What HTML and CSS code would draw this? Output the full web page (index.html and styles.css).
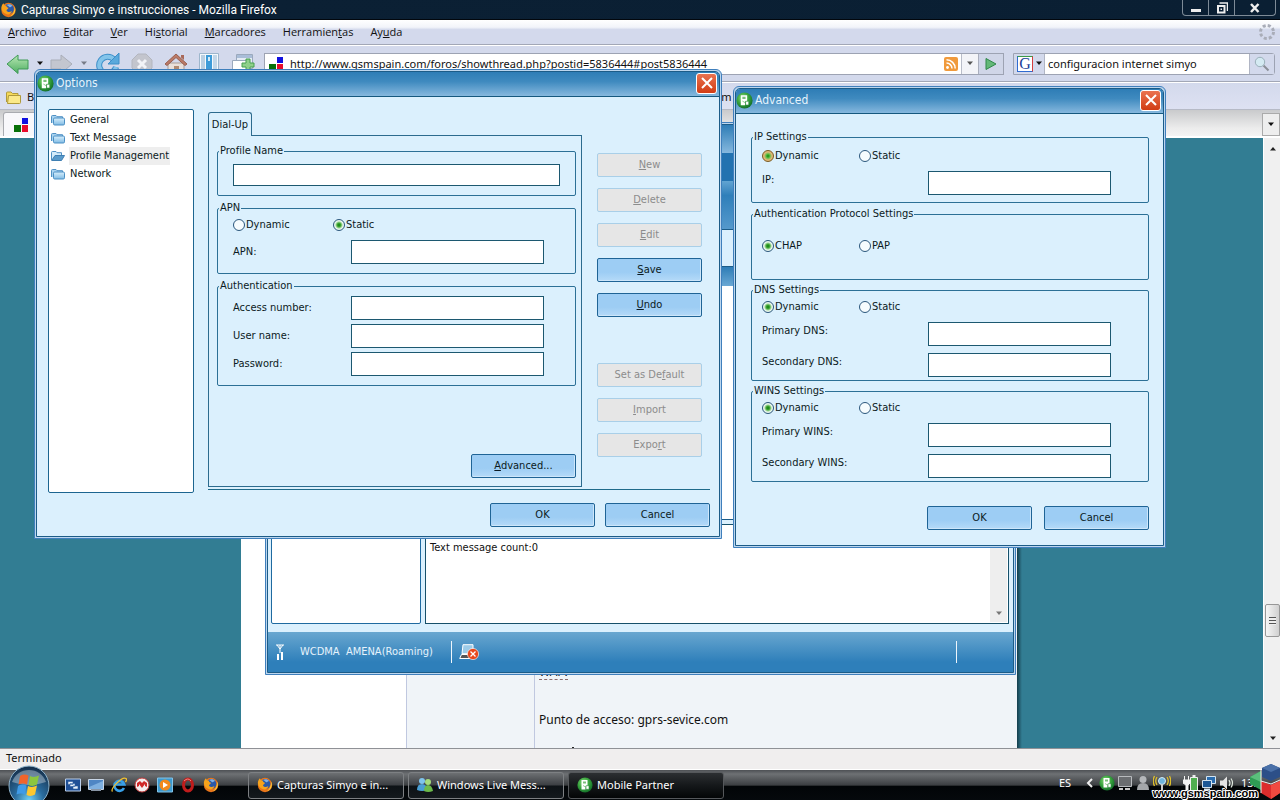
FILE: index.html
```html
<!DOCTYPE html>
<html lang="es">
<head>
<meta charset="utf-8">
<title>Capturas Simyo e instrucciones - Mozilla Firefox</title>
<link rel="stylesheet" href="styles.css">
</head>
<body>
<svg class="defs" aria-hidden="true">
  <defs>
    <radialGradient id="gGreen" cx=".4" cy=".35" r=".7"><stop offset="0" stop-color="#8fdc7e"/><stop offset=".5" stop-color="#3aa53f"/><stop offset="1" stop-color="#0e6a26"/></radialGradient>
    <linearGradient id="gFolder" x1="0" y1="0" x2="0" y2="1"><stop offset="0" stop-color="#d9effc"/><stop offset="1" stop-color="#7fbbe4"/></linearGradient>
    <linearGradient id="gArrow" x1="0" y1="0" x2="0" y2="1"><stop offset="0" stop-color="#b9e8b4"/><stop offset="1" stop-color="#4fae62"/></linearGradient>
    <radialGradient id="gOrb" cx=".5" cy=".85" r=".8"><stop offset="0" stop-color="#6fd0f5"/><stop offset=".45" stop-color="#2a6c9e"/><stop offset="1" stop-color="#16324f"/></radialGradient>
  </defs>
  <symbol id="mobile" viewBox="0 0 16 16"><circle cx="8" cy="8" r="7.6" fill="url(#gGreen)"/><path d="M4.500 3h6v6h-2v3.500h-4z" fill="#fff"/><path d="M6 4.500h3v2H6z" fill="#7cc07c"/><path d="M9 8.700h3v3.600H9z" fill="#fff" stroke="#2b8a3a" stroke-width=".6"/><path d="M6 8.500l2.500 1.500" stroke="#7cc07c" stroke-width=".8"/></symbol>
  <symbol id="fox" viewBox="0 0 16 16"><circle cx="8" cy="8" r="7.2" fill="#e8751a"/><circle cx="8.4" cy="7" r="5" fill="#2b59a8"/><path d="M6 3c2-1.4 5-.8 6 1-1 .2-1.400 1-2.400 1.200C8.500 5.500 8.800 4 6 3z" fill="#7fb2e8"/><path d="M.8 6C1 3.600 2 2 3 1.200l.8 2 2.200.600c-.2 1.200.6 1.600 2 1.900-.4 1.500-1.800 1.500-2 2.800.8 1.900 3.600 1.900 5.400.4-.6 2.900-3.200 4.200-5.800 3.200C2.800 11 1.200 9 .8 6z" fill="#f7a31c"/><path d="M14.200 4.500c1.600 4-.2 8.500-4.200 9.800 2.500-2 4.200-5 4.200-9.800z" fill="#fbd03c"/></symbol>
  <symbol id="folder" viewBox="0 0 14 12"><path d="M.5 9V2.500Q.5 1.500 1.500 1.500H5L6 2.700h5.500V9" fill="#a9d3f0" stroke="#5091c4"/><rect x="2.500" y="4" width="11" height="7" rx="1.200" fill="url(#gFolder)" stroke="#4b8fc4"/></symbol>
  <symbol id="folderopen" viewBox="0 0 14 12"><path d="M.5 10V2.500Q.5 1.500 1.500 1.500H5L6 2.700h4.500V6" fill="#d5ecfa" stroke="#5091c4"/><path d="M.7 10.500L4 5.500h9.500L10.500 10.500z" fill="#5a9bcb" stroke="#3f7fb2"/></symbol>
  <symbol id="blocks" viewBox="0 0 14 14"><path d="M8 0h6v6H8z" fill="#1010e0"/><path d="M0 7h7v7H0z" fill="#087008"/><path d="M8 7h6v7H8z" fill="#e80c2c"/></symbol>
  <symbol id="cross" viewBox="0 0 12 12"><path d="M1 1l10 10M11 1L1 11" stroke="#fff" stroke-width="2"/></symbol>
  <symbol id="down" viewBox="0 0 8 5"><path d="M1 .5h6L4 4z" fill="currentColor"/></symbol>
</svg>

<div class="browser">
  <header class="titlebar">
    <svg width="17" height="16"><use href="#fox"/></svg>
    <h1>Capturas Simyo e instrucciones - Mozilla Firefox</h1>
    <div class="winbtns">
      <button aria-label="Minimizar"><svg width="12" height="12"><path d="M1 7h10v3H1z" fill="#eee"/></svg></button>
      <button aria-label="Restaurar"><svg width="12" height="12"><path d="M3.500 1h8v8" fill="none" stroke="#eee" stroke-width="1.500"/><path d="M2 4h6.500v6.500H2z" fill="none" stroke="#eee" stroke-width="2"/><path d="M4.500 6.500h1.500v1.500H4.500z" fill="#eee"/></svg></button>
      <button class="wide" aria-label="Cerrar"><svg width="12" height="12"><path d="M2 2l7.500 8M9.500 2L2 10" stroke="#eee" stroke-width="2.500"/></svg></button>
    </div>
  </header>
  <nav class="menubar">
    <a href="#"><u>A</u>rchivo</a><a href="#"><u>E</u>ditar</a><a href="#"><u>V</u>er</a><a href="#">Hi<u>s</u>torial</a><a href="#"><u>M</u>arcadores</a><a href="#">Herramien<u>t</u>as</a><a href="#">Ay<u>u</u>da</a>
    <svg class="throbber" width="18" height="18" viewBox="0 0 18 18"><circle cx="9" cy="9" r="6.500" fill="none" stroke="#a9adb8" stroke-width="3" stroke-dasharray="3 2.100"/></svg>
  </nav>
  <div class="toolbar">
    <div class="tools">
      <svg class="back" width="24" height="20" viewBox="0 0 24 20"><path d="M1 10L12 1v5h10v9H12v4.500z" fill="url(#gArrow)" stroke="#3f9a56"/></svg>
      <svg class="drop" width="8" height="5"><use href="#down"/></svg>
      <svg class="fwd" width="24" height="20" viewBox="0 0 24 20"><path d="M22 10L11 1v5H1v9h10v4.500z" fill="#c3c6cf" stroke="#a9adb8"/></svg>
      <svg class="drop dim" width="8" height="5"><use href="#down"/></svg>
      <svg class="gap7" width="24" height="22" viewBox="0 0 24 22"><path d="M18 6.500A8.500 8.500 0 1 0 20 14" fill="none" stroke="#3d8fc9" stroke-width="6"/><path d="M18 6.500A8.500 8.500 0 1 0 20 14" fill="none" stroke="#83c4ea" stroke-width="4"/><path d="M23 0v11H12z" fill="#5aa9dc" stroke="#3d8fc9"/></svg>
      <svg class="gap11" width="22" height="22" viewBox="0 0 22 22"><path d="M7 1h8l6 6v8l-6 6H7l-6-6V7z" fill="#c3c5cd" stroke="#b3b6bf"/><path d="M7 7l8 8M15 7l-8 8" stroke="#f2f3f7" stroke-width="3"/></svg>
      <svg class="gap11" width="24" height="22" viewBox="0 0 24 22"><path d="M4 10h16v11H4z" fill="#e9e0da" stroke="#a99b95"/><path d="M1 11L12 1l11 10-2 1.500-9-8-9 8z" fill="#bb7a67" stroke="#99604f"/><path d="M17 2h3v5l-3-2.500z" fill="#a9695a"/><path d="M10 13h5v8h-5z" fill="#b08a72"/></svg>
      <svg class="gap11" width="20" height="22" viewBox="0 0 20 22"><path d="M.5.500h19v21H.5z" fill="#f4f8fc" stroke="#9db6cc"/><path d="M2 2h4v20H2z" fill="#b9cfe2"/><path d="M7 2h6v20H7z" fill="#3d9bd8"/><path d="M9 4h2v4H9z" fill="#d4ecfa"/><path d="M14 2h4v20h-4z" fill="#c3d7e8"/></svg>
      <svg class="gap12" width="24" height="22" viewBox="0 0 24 22"><path d="M5.500 1.500h16v14h-16z" fill="#e4ebf4" stroke="#9aa9bd"/><path d="M6 2h15v3H6z" fill="#a9bdd8"/><path d="M1.500 7.500h15v13h-15z" fill="#fff" stroke="#9aa9bd"/><path d="M15 6h4v4h4v4h-4v4h-4v-4h-4v-4h4z" fill="#8fd08a" stroke="#47a04e"/></svg>
    </div>
    <div class="urlbox">
      <svg width="14" height="14"><use href="#blocks"/></svg>
      <input aria-label="Dirección" value="http://www.gsmspain.com/foros/showthread.php?postid=5836444#post5836444">
      <svg width="14" height="14" viewBox="0 0 14 14"><rect width="14" height="14" rx="2" fill="#f09a3c"/><circle cx="3.500" cy="10.500" r="1.400" fill="#fff"/><path d="M2.500 6a5.500 5.500 0 0 1 5.500 5.500M2.500 2.800A8.700 8.700 0 0 1 11.200 11.500" fill="none" stroke="#fff" stroke-width="1.500"/></svg>
      <button class="urldrop" aria-label="Historial de direcciones"><svg width="8" height="5"><use href="#down"/></svg></button>
      <button class="go" aria-label="Ir"><svg width="12" height="14" viewBox="0 0 12 14"><path d="M1 1.500L11 7 1 12.500z" fill="#63b878" stroke="#2f8748"/></svg></button>
    </div>
    <div class="searchbox">
      <button class="engine" aria-label="Buscador"><span>G</span><svg width="8" height="5"><use href="#down"/></svg></button>
      <input aria-label="Buscar" value="configuracion internet simyo">
      <button class="lens" aria-label="Buscar"><svg width="16" height="16" viewBox="0 0 16 16"><path d="M9.500 9.500l5 5" stroke="#8b8f98" stroke-width="2"/><circle cx="6" cy="6" r="4.700" fill="#d4eaf2" stroke="#9ab0ba"/></svg></button>
    </div>
  </div>
  <div class="bookmarks">
    <svg width="15" height="13" viewBox="0 0 15 13"><path d="M.5 11V2q0-1 1-1H5l1.500 1.500H12V5" fill="#f5d95a" stroke="#b09a3c"/><path d="M2.500 4.500h12v7q0 1-1 1h-12z" fill="#fbe98a" stroke="#b09a3c"/></svg>
    <span>B</span><span class="mark">m</span>
  </div>
  <div class="tabstrip">
    <div class="tab"><svg width="14" height="14"><use href="#blocks"/></svg></div>
    <button aria-label="Lista de pestañas"><svg width="8" height="5"><use href="#down"/></svg></button>
  </div>
  <div class="viewport">
    <main class="page">
      <div class="sheet">
        <div class="author"></div><div class="side"></div>
        <div class="post"><abbr>WAP:</abbr><p>Punto de acceso: gprs-sevice.com</p><i></i></div>
      </div>
    </main>
    <div class="scroll">
      <svg width="8" height="5" class="up"><use href="#down"/></svg>
      <div class="thumb"></div>
      <svg width="8" height="5"><use href="#down"/></svg>
    </div>
  </div>
  <div class="statusbar">Terminado</div>
</div>

<section class="win partner">
  <div class="frame">
    <div class="band title"></div><div class="band menu"></div><div class="band tools2"></div><div class="band light"></div>
    <div class="panes">
      <div class="list"></div>
      <div class="right">
        <div class="table"><div class="thead"></div></div>
        <div class="preview"><p>Text message count:0</p><div class="bar"><svg width="8" height="5"><use href="#down"/></svg></div></div>
      </div>
    </div>
    <footer>
      <svg width="10" height="16" viewBox="0 0 10 16"><path d="M1 1h8M2 1l3 4 3-4M5 1v8" fill="none" stroke="#fff"/><path d="M2 10h2v6H2zM6 8h2v8H6z" fill="#fff"/></svg>
      <span class="net">WCDMA&nbsp; AMENA(Roaming)</span>
      <span class="sep"></span>
      <svg width="20" height="16" viewBox="0 0 20 16"><path d="M4 .7h10v9H3z" fill="#9ccbe8" stroke="#fff"/><path d="M2.500 10.500h11l2 4H.7z" fill="#555" stroke="#fff"/><circle cx="14" cy="10" r="5.600" fill="#e8481c" stroke="#fff" stroke-width=".6"/><path d="M11.500 7.500l5 5M16.500 7.500l-5 5" stroke="#fff" stroke-width="1.300"/></svg>
      <span class="sep last"></span>
    </footer>
  </div>
</section>

<section class="win options" aria-label="Options">
  <div class="frame">
    <header><svg width="17" height="17"><use href="#mobile"/></svg><h2>Options</h2><button class="close" aria-label="Close"><svg width="12" height="12"><use href="#cross"/></svg></button></header>
    <form class="optbody">
      <ul class="tree">
        <li><svg width="14" height="12"><use href="#folder"/></svg><a href="#">General</a></li>
        <li><svg width="14" height="12"><use href="#folder"/></svg><a href="#">Text Message</a></li>
        <li><svg width="14" height="12"><use href="#folderopen"/></svg><a href="#" class="on">Profile Management</a></li>
        <li><svg width="14" height="12"><use href="#folder"/></svg><a href="#">Network</a></li>
      </ul>
      <div class="main">
        <div class="upper">
          <div class="tabs">
            <button type="button" class="dial">Dial-Up</button>
            <div class="panel">
              <fieldset><legend>Profile Name</legend><div class="name"><input class="box" type="text" aria-label="Profile Name"></div></fieldset>
              <fieldset><legend>APN</legend>
                <div class="radios"><label><input type="radio" name="apn">Dynamic</label><label><input type="radio" name="apn" checked>Static</label></div>
                <div class="row first"><label for="apn">APN:</label><input class="box" id="apn" type="text"></div>
              </fieldset>
              <fieldset><legend>Authentication</legend>
                <div class="row"><label for="num">Access number:</label><input class="box" id="num" type="text"></div>
                <div class="row"><label for="usr">User name:</label><input class="box" id="usr" type="text"></div>
                <div class="row"><label for="pwd">Password:</label><input class="box" id="pwd" type="password"></div>
              </fieldset>
              <button type="button" class="btn adv"><span><u>A</u>dvanced...</span></button>
            </div>
          </div>
          <div class="actions">
            <button type="button" class="btn" disabled><span><u>N</u>ew</span></button>
            <button type="button" class="btn" disabled><span><u>D</u>elete</span></button>
            <button type="button" class="btn" disabled><span><u>E</u>dit</span></button>
            <button type="button" class="btn"><span><u>S</u>ave</span></button>
            <button type="button" class="btn"><span><u>U</u>ndo</span></button>
            <button type="button" class="btn second" disabled><span>Set as De<u>f</u>ault</span></button>
            <button type="button" class="btn" disabled><span><u>I</u>mport</span></button>
            <button type="button" class="btn" disabled><span>Expo<u>r</u>t</span></button>
          </div>
        </div>
        <div class="foot"><button type="button" class="btn">OK</button><button type="button" class="btn">Cancel</button></div>
      </div>
    </form>
  </div>
</section>

<section class="win advanced" aria-label="Advanced">
  <div class="frame">
    <header><svg width="17" height="17"><use href="#mobile"/></svg><h2>Advanced</h2><button class="close" aria-label="Close"><svg width="12" height="12"><use href="#cross"/></svg></button></header>
    <form class="advbody">
      <fieldset class="ip"><legend>IP Settings</legend>
        <div class="radios"><label><input class="hot" type="radio" name="ip" checked>Dynamic</label><label><input type="radio" name="ip">Static</label></div>
        <div class="row"><label for="ip">IP:</label><input class="box" id="ip" type="text"></div>
      </fieldset>
      <fieldset class="auth"><legend>Authentication Protocol Settings</legend>
        <div class="radios"><label><input type="radio" name="au" checked>CHAP</label><label><input type="radio" name="au">PAP</label></div>
      </fieldset>
      <fieldset><legend>DNS Settings</legend>
        <div class="radios"><label><input type="radio" name="dns" checked>Dynamic</label><label><input type="radio" name="dns">Static</label></div>
        <div class="row"><label for="d1">Primary DNS:</label><input class="box" id="d1" type="text"></div>
        <div class="row"><label for="d2">Secondary DNS:</label><input class="box" id="d2" type="text"></div>
      </fieldset>
      <fieldset><legend>WINS Settings</legend>
        <div class="radios"><label><input type="radio" name="wins" checked>Dynamic</label><label><input type="radio" name="wins">Static</label></div>
        <div class="row"><label for="w1">Primary WINS:</label><input class="box" id="w1" type="text"></div>
        <div class="row"><label for="w2">Secondary WINS:</label><input class="box" id="w2" type="text"></div>
      </fieldset>
      <div class="foot"><button type="button" class="btn">OK</button><button type="button" class="btn">Cancel</button></div>
    </form>
  </div>
</section>

<footer class="taskbar">
  <button class="orb" aria-label="Inicio"><svg width="42" height="42" viewBox="0 0 42 42"><circle cx="21" cy="21" r="20" fill="url(#gOrb)" stroke="#8fb4cc"/><path d="M4 17a18 18 0 0 1 34 0q-17 6-34 0z" fill="#fff" opacity=".35"/><path d="M12 11q4-2.500 8.500-.5l-1.500 9q-4-2-8.500 0z" fill="#f0642c"/><path d="M22 11q4 2 9-.5l-2 9q-4 2.500-8.500.5z" fill="#8cc63e"/><path d="M10 21q4-2.500 8.500-.5l-1.500 9q-4-2-8.500 0z" fill="#3f9be8"/><path d="M20 21q4 2 9-.5l-2 9q-4 2.500-8.500.5z" fill="#fdc82f"/></svg></button>
  <div class="quick">
    <svg width="16" height="16" viewBox="0 0 16 16"><path d="M.5 2h15v12H.5z" fill="#1f4f96" stroke="#bcd0ea"/><path d="M3 4.500h5v3H3zM5 6.500h5v3H5zM8 9h5v3H8z" fill="#e8f0fa" stroke="#2a5aa0" stroke-width=".6"/></svg>
    <svg width="16" height="16" viewBox="0 0 16 16"><path d="M.5 2.500h15v10H.5z" fill="#4f86c4" stroke="#c7d5e6"/><path d="M1 10L15 4v8H1z" fill="#7fb0e0"/><path d="M3 12h10v2H3z" fill="#8895a5"/></svg>
    <svg width="16" height="16" viewBox="0 0 16 16"><path d="M13 11a5 5 0 1 1 .3-3.500H5" fill="none" stroke="#38a0e8" stroke-width="2.600"/><path d="M1.500 14.500C-1 12 11-1 15 1.500c1 .8.300 2.500-.5 3.500" fill="none" stroke="#f2c230" stroke-width="1.300"/></svg>
    <svg width="16" height="16" viewBox="0 0 16 16"><circle cx="8" cy="8" r="7" fill="#f4eeee" stroke="#c23a3a"/><path d="M3 10V6l3-2 2 2 2-2 3 2v4l-2-1V7l-3 4-3-4v2z" fill="#d02828"/></svg>
    <svg width="16" height="16" viewBox="0 0 16 16"><path d="M.5 1h15v14H.5z" fill="#3c9ad0" stroke="#83c4e8"/><circle cx="8" cy="8" r="5.500" fill="#f28a1c"/><path d="M6 5l5 3-5 3z" fill="#fff"/></svg>
    <svg width="16" height="16" viewBox="0 0 16 16"><ellipse cx="8" cy="8" rx="4.500" ry="6" fill="none" stroke="#c01c1c" stroke-width="3"/><path d="M4 4q4-4 7 0" fill="none" stroke="#f08a80"/></svg>
    <svg width="16" height="16"><use href="#fox"/></svg>
  </div>
  <div class="tasks">
    <button><svg width="16" height="16"><use href="#fox"/></svg>Capturas Simyo e in...</button>
    <button><svg width="16" height="16" viewBox="0 0 16 16"><circle cx="5" cy="4" r="3" fill="#7fc4ec"/><path d="M0 13q0-6 5-6t5 6q-5 2-10 0z" fill="#4a9fd4"/><circle cx="11" cy="5" r="3" fill="#a4dc7c"/><path d="M7 14q0-6 4-6t5 6q-5 2-9 0z" fill="#6cba4a"/></svg>Windows Live Mess...</button>
    <button class="active"><svg width="16" height="16"><use href="#mobile"/></svg>Mobile Partner</button>
  </div>
  <div class="tray">
    <span>ES</span>
    <svg class="chev" width="8" height="10" viewBox="0 0 8 10"><path d="M6 1L2 5l4 4" fill="none" stroke="#eee" stroke-width="2"/></svg>
    <svg width="16" height="16"><use href="#mobile"/></svg>
    <svg width="16" height="16" viewBox="0 0 16 16"><path d="M1.500 1.500h13v10h-13z" fill="#6a6d70" stroke="#b8bbbe"/><path d="M2 14h4M8 14h5" stroke="#c8c8c8" stroke-width="2"/></svg>
    <svg width="16" height="16" viewBox="0 0 16 16"><circle cx="8" cy="4.500" r="3.500" fill="#b4b7ba"/><path d="M2 15q0-7 6-7t6 7z" fill="#a4a7aa"/></svg>
    <svg width="18" height="16" viewBox="0 0 18 16"><circle cx="9" cy="6" r="3.500" fill="#6fb4dc" stroke="#d8ecf4"/><path d="M9 9v6" stroke="#ccc" stroke-width="2"/><path d="M4 2q-2.500 4 0 8M14 2q2.500 4 0 8M1.500 1q-2.500 5 0 10M16.500 1q2.500 5 0 10" fill="none" stroke="#e0c02c" stroke-width="1.300"/></svg>
    <svg class="plug" width="16" height="16" viewBox="0 0 16 16"><path d="M7.500 2.500h7v13h-7z" fill="#4fae4f" stroke="#eee"/><path d="M9.500 0h3v2h-3z" fill="#eee"/><path d="M1.500 1v4M5.500 1v4M0 5h7v3L5 10v5H3v-5L0 8z" stroke="#f4f4f4" fill="#f4f4f4"/></svg>
    <svg width="16" height="16" viewBox="0 0 16 16"><path d="M5.500 1.500h9v7h-9z" fill="#2a6cae" stroke="#d4e4f0"/><path d="M1.500 5.500h9v7h-9z" fill="#1c5896" stroke="#d4e4f0"/><path d="M3 14.500h6" stroke="#d4e4f0" stroke-width="2"/></svg>
    <svg width="16" height="16" viewBox="0 0 16 16"><path d="M1 5.500h3l4-4v13l-4-4H1z" fill="#e4e4e4"/><path d="M10 5q2 3 0 6M12 3.500q3 4.500 0 9" fill="none" stroke="#dfe8df" stroke-width="1.200"/></svg>
    <span class="clock">13:</span>
  </div>
  <div class="brand"><span>www.gsmspain.com</span>
    <svg width="30" height="36" viewBox="0 0 30 36"><path d="M12 4l9-4 9 4v9l-9 4-9-4z" fill="#2c4f88"/><path d="M12 4l9 4 9-4-9-4z" fill="#4a70a8"/><path d="M0 13l11-6v19L0 20z" fill="#2f9c54"/><path d="M0 13l11 5V7z" fill="#5bbf7c"/><path d="M11 17l10 4 9-4v12l-9 6-10-6z" fill="#dc2c2c"/><path d="M21 21l9-4v12l-9 6z" fill="#f04a40"/><path d="M11 17V6M11 17l10 3 9-4M11 17v12" stroke="#eee" fill="none"/></svg>
  </div>
</footer>
</body>
</html>
```

FILE: styles.css
```css
* { box-sizing: border-box; }
html, body { height: 100%; }
body {
  margin: 0; min-height: 100vh; display: flex; flex-direction: column; overflow: hidden; position: relative;
  font: 11px/14px "DejaVu Sans Condensed", "DejaVu Sans", sans-serif; color: #0b1a22; background: #000;
}
a { color: inherit; text-decoration: none; }
u { text-underline-offset: 1px; }
button, input { font: inherit; color: inherit; margin: 0; padding: 0; border: 0; background: none; outline: 0; }
svg { flex: none; display: block; }
h1, h2, p, ul { margin: 0; padding: 0; font-weight: normal; }
.defs { position: absolute; width: 0; height: 0; }

/* Browser */
.browser { flex: 1; min-height: 0; display: flex; flex-direction: column; font: 11px/14px "Noto Sans", sans-serif; color: #111; background: #d3d9ec; }
.titlebar { height: 20px; display: flex; align-items: center; gap: 4px; background: linear-gradient(90deg, #1d3d4c, #0b2034 18%, #0a1f33); border-bottom: 1px solid #02070d; color: #fff; }
.titlebar h1 { flex: 1; font: 12px/16px Roboto, sans-serif; }
.winbtns { display: flex; align-self: flex-start; height: 16px; margin-right: 4px; border: 1px solid #7e8b97; border-top: 0; border-radius: 0 0 4px 4px; }
.winbtns button { width: 26px; display: grid; place-items: center; border-right: 1px solid #7e8b97; }
.winbtns .wide { width: 40px; border: 0; }
.menubar { height: 25px; padding: 0 4px 0 8px; display: flex; align-items: center; gap: 17px; background: linear-gradient(#fff, #f2f4fa 30%, #d3d9ec 40%); border-bottom: 1px solid #a2a7b6; font-family: "Open Sans", sans-serif; }
.throbber { margin-left: auto; }
.toolbar { height: 37px; padding: 0 5px 0 6px; display: flex; align-items: center; border-top: 1px solid #fff; border-bottom: 1px solid #a2a7b6; }
.tools { width: 258px; display: flex; align-items: center; }
.drop { margin: 0 6px 0 6px; }
.dim { color: #777c88; }
.gap7 { margin-left: 2px; }
.gap12 { margin-left: 12px; }
.gap11 { margin-left: 11px; }
.urlbox, .searchbox { height: 22px; display: flex; align-items: center; background: #fff; border: 1px solid #9da3b3; }
.urlbox { flex: 1; padding-left: 4px; }
.urlbox input { flex: 1; min-width: 0; padding-left: 7px; }
.urldrop { width: 17px; height: 20px; margin-left: 3px; display: grid; place-items: center; border-left: 1px solid #b9bdc9; background: #f3f4f8; color: #555; }
.go { width: 25px; height: 20px; display: grid; place-items: center; border-left: 1px solid #a9aebd; background: #d0d6e8; }
.searchbox { width: 267px; margin-left: 9px; border-radius: 0 3px 3px 0; }
.searchbox { width: 262px; }
.searchbox input { flex: 1; min-width: 0; padding-left: 3px; }
.engine { width: 31px; height: 20px; padding-left: 3px; display: flex; align-items: center; gap: 2px; background: #d3d9ec; border-right: 1px solid #b0b5c4; }
.engine span { width: 16px; height: 16px; border: 1px solid #2f6bd0; border-top-color: #3c9a4a; border-right-color: #d43c3c; background: #fff; color: #1b3f98; font: 16px/14px "Liberation Serif", serif; text-align: center; }
.lens { width: 25px; height: 20px; display: grid; place-items: center; background: #d3d9ec; border-left: 1px solid #b0b5c4; }
.bookmarks { height: 28px; padding: 2px 6px 0; display: flex; align-items: center; gap: 6px; background: linear-gradient(#d3d9ec, #dde1f2); border-top: 1px solid #fff; border-bottom: 1px solid #b6bac6; }
.mark { margin-left: 681px; }
.tabstrip { height: 28px; padding-left: 3px; display: flex; align-items: flex-end; justify-content: space-between; background: linear-gradient(#c9cacc, #ececec 70%, #f4f4f4); border-bottom: 2px solid #fff; }
.tab { width: 240px; height: 24px; padding-left: 10px; display: flex; align-items: center; background: #f8f8fb; border: 1px solid #a9abb0; border-bottom: 0; border-radius: 3px 3px 0 0; }
.tabstrip button { width: 18px; height: 23px; display: grid; place-items: center; background: #eee; border: 1px solid #aaa; }
.viewport { flex: 1; min-height: 0; display: flex; }
.page { flex: 1; overflow: hidden; background: #327d93; display: flex; justify-content: center; }
.sheet { width: 781px; padding-right: 5px; display: flex; background: linear-gradient(90deg, #143d4b, #327d93) right / 5px 100% no-repeat; }
.author { width: 166px; background: #fff; border-right: 1px solid #c0c8e0; }
.side { width: 128px; background: #f0f4f8; border-right: 1px solid #c0c8e0; }
.post { flex: 1; background: #f0f4f8; padding-left: 4px; display: flex; flex-direction: column; justify-content: flex-end; align-items: flex-start; font: 12px/16px "Noto Sans", sans-serif; }
.post abbr { line-height: 14px; border-bottom: 1px dashed #8a6a6a; margin-bottom: 32px; }
.post p { margin-bottom: 19px; }
.post i { width: 2px; height: 1px; margin-left: 33px; background: #222; }
.scroll { width: 17px; padding: 8px 0 7px 1px; background: #f0f0f0; border-left: 1px solid #fff; display: flex; flex-direction: column; align-items: center; justify-content: space-between; color: #222; }
.up { transform: rotate(180deg); }
.thumb { width: 15px; height: 33px; margin-top: auto; margin-bottom: 99px; border: 1px solid #979797; border-radius: 2px; background: repeating-linear-gradient(#555 0 1px, #eee 1px 3px) center / 7px 8px no-repeat, linear-gradient(90deg, #f6f6f6, #d0d0d0); }
.statusbar { height: 22px; padding: 0 6px; line-height: 18px; background: #f0eeee; border-top: 1px solid #8f9196; border-bottom: 1px solid #fff; }

/* Application windows */
.win { position: absolute; border: 1px solid #3f7fbc; background: #bcd6ee; border-radius: 6px 6px 0 0; padding: 1px; }
.frame { height: 100%; border: 1px solid #1c5c88; border-radius: 5px 5px 0 0; background: #dbf0fd; overflow: hidden; display: flex; flex-direction: column; }
.options { left: 34px; top: 69px; width: 688px; z-index: 3; }
.advanced { left: 733px; top: 86px; width: 433px; z-index: 3; }
.partner { left: 265px; top: 122px; width: 751px; height: 553px; z-index: 2; }
.win header { height: 25px; padding: 0 2px 2px 0; display: flex; align-items: center; gap: 2px; background: linear-gradient(#2e7db6, #3f8abf 40%, #86b8de); border-bottom: 1px solid #15587e; color: #e6f3fc; }
.win h2 { flex: 1; font: 12px/16px "DejaVu Sans Condensed", "DejaVu Sans", sans-serif; }
.close { width: 21px; height: 21px; display: grid; place-items: center; background: linear-gradient(#ea7350, #d13c14); border: 1px solid #fff; border-radius: 3px; }
.optbody { padding: 12px 9px 9px 11px; display: flex; gap: 14px; }
.tree { width: 146px; height: 384px; padding: 1px 2px; list-style: none; background: #fff; border: 1px solid #1c6590; border-radius: 2px; }
.tree li { height: 18px; display: flex; align-items: center; gap: 4px; }
.tree a { padding: 0 1px; line-height: 18px; }
.tree .on { background: #eeeeee; }
.main { flex: 1; padding-top: 3px; }
.upper { display: flex; gap: 15px; padding: 0 8px 2px 0; border-bottom: 1px solid #1f6a8a; }
.tabs { flex: 1; }
.dial { display: block; position: relative; width: 44px; height: 24px; margin-bottom: -1px; background: #dbf0fd; border: 1px solid #2c6b8e; border-bottom: 0; border-radius: 3px 3px 0 0; white-space: nowrap; }
.panel { min-height: 352px; padding: 8px 5px 8px 8px; display: flex; flex-direction: column; gap: 5px; border: 1px solid #2c6b8e; }
fieldset { margin: 0; min-width: 0; padding: 3px 15px 9px; border: 1px solid #2c7096; border-radius: 2px; }
legend { margin-left: -14px; padding: 0 1px; line-height: 14px; }
.name { padding-top: 3px; }
.name .box { display: block; width: 100%; height: 22px; }
.box { height: 24px; padding: 0 3px; background: #fff; border: 1px solid #1c5870; }
.radios { display: flex; height: 14px; }
.radios label { width: 100px; display: flex; align-items: center; gap: 1px; }
.radios input { appearance: none; width: 12px; height: 12px; border: 1px solid #2a567c; border-radius: 50%; background: #f6fcfe; }
.radios input:checked { background: radial-gradient(circle, #1f8c1f 0 1px, #4cae3c 2px, #eaf8ee 4px); }
.radios .hot:checked { border-color: #7a5a20; background: radial-gradient(circle, #2c9c1c 0 1px, #5cc048 2px, #e0b878 4px); }
.row { display: flex; align-items: center; }
.row + .row { margin-top: 4px; }
.row label { width: 118px; }
.row .box { width: 193px; }
.row.first { margin-top: 8px; }
.btn { width: 105px; height: 24px; background: linear-gradient(#9dcdf4 60%, #b5daf8); border: 1px solid #1f6496; border-radius: 2px; box-shadow: inset -1px -1px 0 #cde6fa; }
.btn:disabled { background: #e6e6e6; border-color: #a9cfe8; color: #8c8c8c; box-shadow: none; }
.adv { margin-top: auto; align-self: flex-end; }
.actions { padding-top: 41px; display: flex; flex-direction: column; gap: 11px; }
.second { margin-top: 35px; }
.foot { padding-top: 13px; display: flex; justify-content: flex-end; gap: 10px; }

.advbody { padding: 16px 14px 15px 15px; display: flex; flex-direction: column; gap: 3px; }
.advbody fieldset { padding: 3px 10px 3px; }
.advbody legend { margin-left: -9px; }
.advbody .radios label { width: 97px; }
.advbody .row { margin-top: 8px; align-items: flex-start; }
.advbody .row + .row { margin-top: 7px; }
.advbody .row label { width: 166px; line-height: 18px; }
.advbody .row .box { width: 183px; }
.advbody .ip { padding: 5px 10px 7px; margin-bottom: 1px; }
.advbody .auth { padding: 18px 10px 26px; }
.advbody .foot { padding-top: 21px; gap: 12px; }

/* Mobile Partner main window */
.partner .title { height: 28px; background: linear-gradient(#2e7db6, #86b8de); }
.partner .menu { height: 28px; background: #2272b0; }
.partner .tools2 { height: 49px; background: linear-gradient(#62a4d2, #2f7fba 30%, #5599cc); border-bottom: 1px solid #1c5c88; }
.partner .light { height: 36px; }
.panes { flex: 1; min-height: 0; padding: 0 4px 8px 3px; display: flex; gap: 4px; }
.list { width: 150px; background: #fff; border: 1px solid #1f6aa0; border-radius: 2px; }
.right { flex: 1; display: flex; flex-direction: column; gap: 4px; }
.table { height: 254px; background: #fff; border: 1px solid #1c5c88; }
.thead { height: 19px; background: linear-gradient(#2e7db6, #6aa8d4); }
.preview { flex: 1; padding-left: 4px; display: flex; justify-content: space-between; background: #fff; border: 1px solid #16506a; }
.preview p { padding-top: 16px; color: #111; }
.bar { width: 17px; margin: 1px; padding-bottom: 6px; background: #eee; display: flex; align-items: flex-end; justify-content: center; color: #777; }
.partner footer { height: 40px; padding: 0 7px; display: flex; align-items: center; background: linear-gradient(#69a7d0, #2e7fba 75%); color: #e6f3fc; }
.net { width: 151px; padding-left: 15px; margin-right: 16px; white-space: nowrap; }
.partner .sep { width: 1px; height: 22px; background: #eef6fc; margin: 0 8px 0 -1px; }
.partner .sep + svg { margin-left: -1px; }
.partner .last { margin: 0 49px 0 auto; }

/* Taskbar */
.taskbar { position: relative; height: 30px; display: flex; align-items: center; background: linear-gradient(#4d5054, #6e7174 4px, #3c3f42 50%, #020507 55%, #05090c); color: #fff; font: 11px/14px "Noto Sans", sans-serif; z-index: 4; }
.orb { width: 42px; height: 42px; margin: -5px 12px 0 8px; align-self: flex-start; }
.quick { width: 186px; display: flex; gap: 7px; padding-left: 3px; }
.tasks { display: flex; gap: 4px; }
.tasks button { width: 156px; height: 27px; padding-left: 8px; display: flex; align-items: center; gap: 4px; text-align: left; border: 1px solid #7d8083; border-radius: 3px; background: linear-gradient(#6d7073, #3c3f43 48%, #0d1216 52%, #14191d); }
.tasks .active { background: linear-gradient(#2c2f32, #15181a 50%, #030506); border-color: #55585b; }
.tray { margin-left: auto; display: flex; align-items: center; gap: 2px; padding-bottom: 5px; margin-right: 23px; }
.tray span { width: 25px; }
.tray .chev { margin-right: 3px; }
.tray .plug { margin-left: 10px; }
.tray .clock { width: 16px; margin-left: 4px; }
.brand { position: absolute; right: 0; bottom: 0; display: flex; align-items: flex-end; }
.brand span { font: bold 11px/14px "Liberation Sans", sans-serif; color: #000; text-shadow: 1px 0 #fff, -1px 0 #fff, 0 1px #fff, 0 -1px #fff, 1px 1px #fff, -1px -1px #fff; margin-right: -8px; }
```
